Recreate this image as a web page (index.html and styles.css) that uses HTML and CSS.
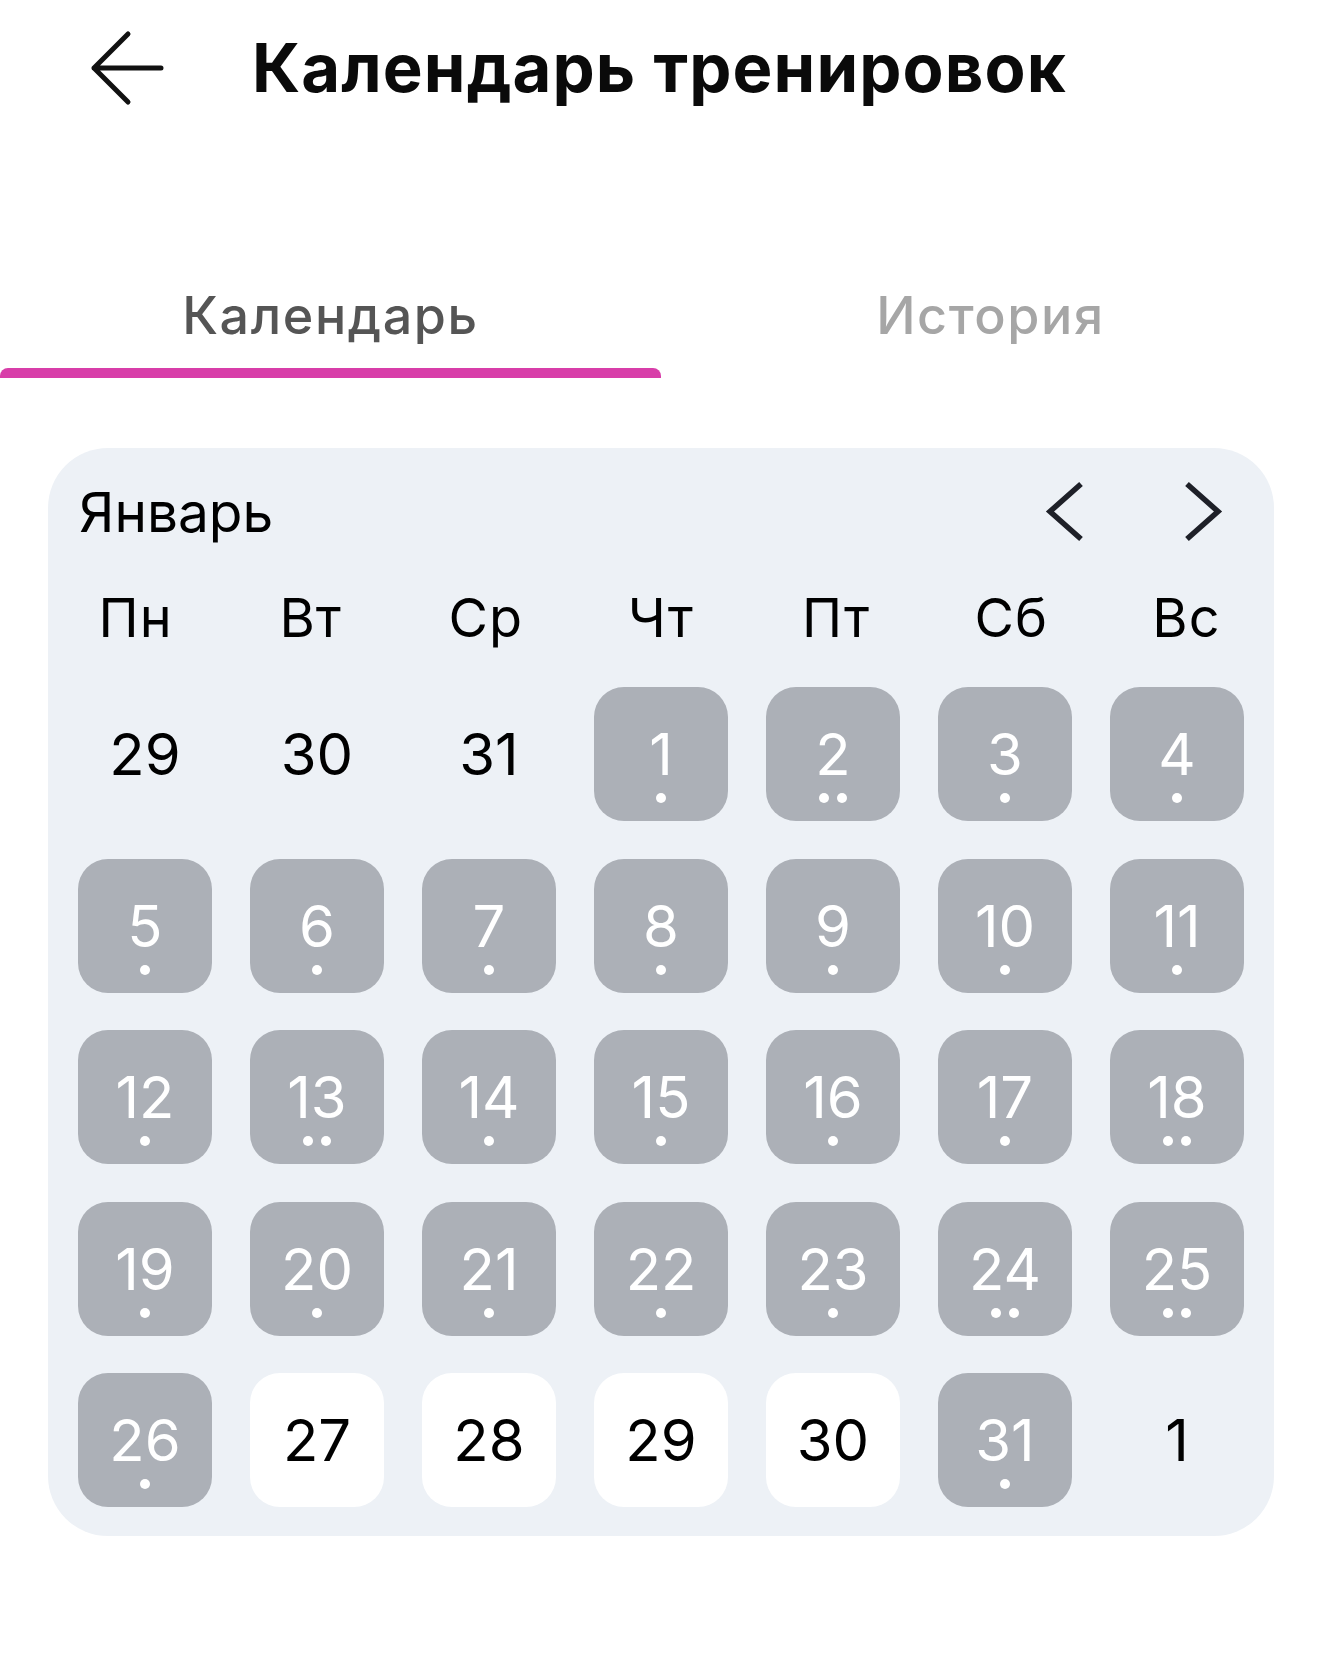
FILE: index.html
```
<!DOCTYPE html>
<html lang="ru">
<head>
<meta charset="utf-8">
<title>Календарь тренировок</title>
<link rel="stylesheet" href="styles.css">
</head>
<body>
<header class="header">
  <svg class="back" width="80" height="80" viewBox="0 0 80 80" aria-hidden="true">
    <path d="M40 6 L6 40 L40 74 M6 40 L73 40" fill="none" stroke="#111" stroke-width="5" stroke-linecap="round" stroke-linejoin="round"/>
  </svg>
  <h1 class="title">Календарь тренировок</h1>
</header>

<nav class="tabs">
  <div class="tab active"><span class="tab-label">Календарь</span><span class="tab-bar"></span></div>
  <div class="tab"><span class="tab-label">История</span><span class="tab-bar"></span></div>
</nav>

<section class="card">
  <div class="month-row">
    <span class="month">Январь</span>
    <div class="arrows">
      <svg width="44" height="64" viewBox="0 0 44 64" aria-hidden="true"><path d="M38 4 L7 31.5 L38 59" fill="none" stroke="#1e2028" stroke-width="5.5"/></svg>
      <svg width="44" height="64" viewBox="0 0 44 64" aria-hidden="true"><path d="M6 4 L37 31.5 L6 59" fill="none" stroke="#1e2028" stroke-width="5.5"/></svg>
    </div>
  </div>
  <div class="weekdays">
    <span>Пн</span><span>Вт</span><span>Ср</span><span>Чт</span><span>Пт</span><span>Сб</span><span>Вс</span>
  </div>
  <div class="grid">
    <div class="day">29</div>
    <div class="day">30</div>
    <div class="day">31</div>
    <div class="day busy">1<span class="dots"><i></i></span></div>
    <div class="day busy">2<span class="dots"><i></i><i></i></span></div>
    <div class="day busy">3<span class="dots"><i></i></span></div>
    <div class="day busy">4<span class="dots"><i></i></span></div>

    <div class="day busy">5<span class="dots"><i></i></span></div>
    <div class="day busy">6<span class="dots"><i></i></span></div>
    <div class="day busy">7<span class="dots"><i></i></span></div>
    <div class="day busy">8<span class="dots"><i></i></span></div>
    <div class="day busy">9<span class="dots"><i></i></span></div>
    <div class="day busy">10<span class="dots"><i></i></span></div>
    <div class="day busy">11<span class="dots"><i></i></span></div>

    <div class="day busy">12<span class="dots"><i></i></span></div>
    <div class="day busy">13<span class="dots"><i></i><i></i></span></div>
    <div class="day busy">14<span class="dots"><i></i></span></div>
    <div class="day busy">15<span class="dots"><i></i></span></div>
    <div class="day busy">16<span class="dots"><i></i></span></div>
    <div class="day busy">17<span class="dots"><i></i></span></div>
    <div class="day busy">18<span class="dots"><i></i><i></i></span></div>

    <div class="day busy">19<span class="dots"><i></i></span></div>
    <div class="day busy">20<span class="dots"><i></i></span></div>
    <div class="day busy">21<span class="dots"><i></i></span></div>
    <div class="day busy">22<span class="dots"><i></i></span></div>
    <div class="day busy">23<span class="dots"><i></i></span></div>
    <div class="day busy">24<span class="dots"><i></i><i></i></span></div>
    <div class="day busy">25<span class="dots"><i></i><i></i></span></div>

    <div class="day busy">26<span class="dots"><i></i></span></div>
    <div class="day free">27</div>
    <div class="day free">28</div>
    <div class="day free">29</div>
    <div class="day free">30</div>
    <div class="day busy">31<span class="dots"><i></i></span></div>
    <div class="day">1</div>
  </div>
</section>
</body>
</html>
```

FILE: styles.css
```
* { box-sizing: border-box; }

html, body {
  margin: 0;
  padding: 0;
  background: #ffffff;
}

body {
  width: 1320px;
  font-family: Inter, "Noto Sans", "DejaVu Sans", sans-serif;
  color: #000;
}

.header {
  display: flex;
  align-items: center;
  height: 136px;
  padding-left: 88px;
}

.back {
  display: block;
  flex: none;
}

.title {
  margin: 0 0 0 84px;
  font-size: 67px;
  font-weight: 700;
  line-height: 80px;
  letter-spacing: 1.1px;
  color: #0a0a0a;
}

.tabs {
  display: grid;
  grid-template-columns: 661px 659px;
  margin-top: 148px;
}

.tab {
  display: flex;
  flex-direction: column;
  align-items: stretch;
  text-align: center;
}

.tab-label {
  font-size: 52px;
  line-height: 64px;
  font-weight: 500;
  letter-spacing: 1.6px;
  color: #a6a6a6;
}

.tab-bar {
  height: 10px;
  margin-top: 20px;
  border-radius: 8px 8px 0 0;
}

.tab.active .tab-label { color: #555555; }
.tab.active .tab-bar { background: #d83ea9; }

.card {
  width: 1226px;
  margin: 70px 0 0 48px;
  padding: 0 30px 29px;
  background: #edf1f6;
  border-radius: 60px;
}

.month-row {
  display: flex;
  align-items: center;
  justify-content: space-between;
  height: 128px;
}

.month {
  font-size: 55px;
  line-height: 64px;
  font-weight: 400;
  padding-left: 1px;
}

.arrows {
  display: flex;
  align-items: center;
  gap: 94px;
  margin-right: 19px;
}

.arrows svg { display: block; }

.weekdays {
  display: grid;
  grid-template-columns: repeat(7, 1fr);
  margin: 0 -30px;
  height: 84px;
  align-items: center;
  text-align: center;
  font-size: 54px;
  line-height: 60px;
  letter-spacing: 1px;
}

.grid {
  display: grid;
  grid-template-columns: repeat(7, 134px);
  grid-auto-rows: 134px;
  column-gap: 38px;
  row-gap: 37.5px;
  margin-top: 27px;
}

.day {
  position: relative;
  display: flex;
  align-items: center;
  justify-content: center;
  border-radius: 30px;
  font-size: 58px;
  line-height: 1;
  color: #000;
}

.day.busy {
  background: #acb0b7;
  color: #ffffff;
}

.day.free {
  background: #ffffff;
}

.dots {
  position: absolute;
  left: 50%;
  bottom: 18px;
  transform: translateX(-50%);
  display: flex;
  gap: 8px;
}

.dots i {
  display: block;
  width: 10px;
  height: 10px;
  border-radius: 50%;
  background: #ffffff;
}
```
